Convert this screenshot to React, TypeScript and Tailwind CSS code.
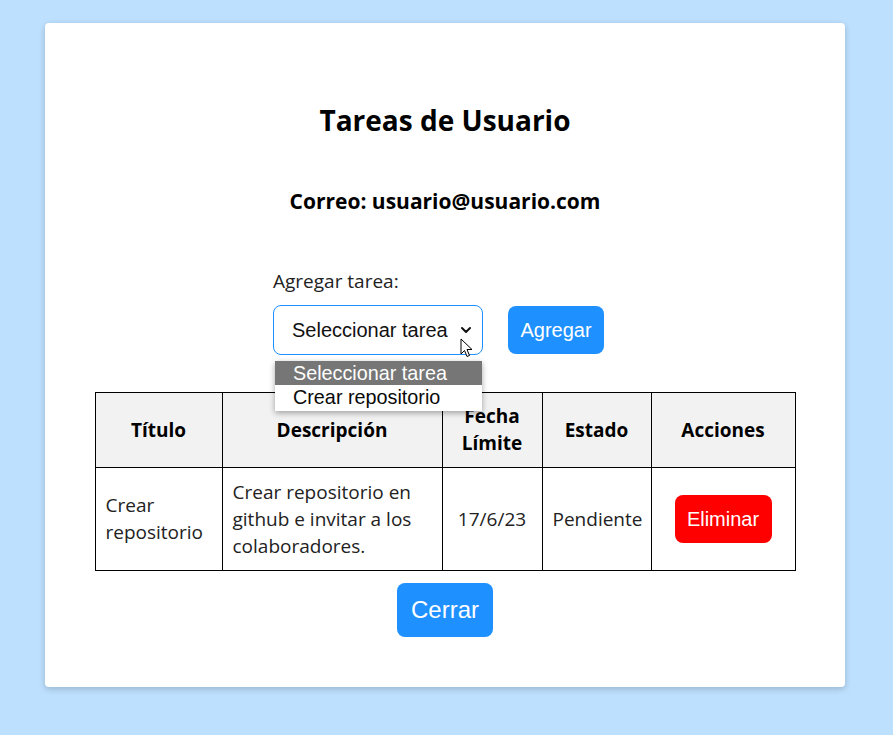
import { ChevronDown } from "lucide-react";

const segoe = "font-['Open_Sans',sans-serif]";
const arial = "font-['Liberation_Sans',Arial,sans-serif]";

const tasks = [
  {
    id: 1,
    title: "Crear repositorio",
    description: "Crear repositorio en github e invitar a los colaboradores.",
    due: "17/6/23",
    status: "Pendiente"
  }
];

function Cursor() {
  return (
    <svg
      className="pointer-events-none absolute left-[187px] top-[33px]"
      width="14"
      height="20"
      viewBox="0 0 14 20"
    >
      <path
        d="M1 1 L1 16 L4.5 12.5 L7 18.5 L9.5 17.5 L7 11.5 L12 11.5 Z"
        fill="white"
        stroke="black"
        strokeWidth="1"
        strokeLinejoin="round"
      />
    </svg>
  );
}

export default function App() {
  return (
    <div className={`min-h-screen bg-[#bde0fe] pt-[23px] pb-[48px] ${segoe}`}>
      <div className="ml-[45px] w-[800px] rounded-[4px] bg-white pt-[78px] pb-[50px] shadow-[0_2px_6px_rgba(0,0,0,0.2)]">
        <h2 className="text-center text-[28px] font-bold leading-[38px] text-black">Tareas de Usuario</h2>
        <h3 className="mt-[47px] text-center text-[21px] font-bold leading-[30px] text-black">
          Correo: usuario@usuario.com
        </h3>

        <div className="mt-[52px] pl-[228px]">
          <label className="block text-[19px] leading-[27px] text-[#222]">Agregar tarea:</label>
          <div className="mt-[10px] flex items-center gap-[25px]">
            <div className="relative">
              <div
                className={`flex h-[50px] w-[210px] items-center justify-between rounded-[8px] border border-[#1e90ff] pl-[18px] pr-[8px] text-[20px] text-[#111] ${arial}`}
              >
                <span>Seleccionar tarea</span>
                <ChevronDown className="h-4 w-4" strokeWidth={3} />
              </div>
              <Cursor />
              <div
                className={`absolute left-[2px] top-[56px] z-10 w-[207px] bg-white pb-[2px] text-[19.8px] leading-[24px] shadow-[0_2px_6px_rgba(0,0,0,0.35)] ${arial}`}
              >
                <div className="bg-[#767676] pl-[18px] text-white">Seleccionar tarea</div>
                <div className="pl-[18px] text-[#0a0a0a]">Crear repositorio</div>
              </div>
            </div>
            <button
              className={`h-[48px] w-[96px] rounded-[8px] bg-[#1e90ff] text-[20px] text-white ${arial}`}
            >
              Agregar
            </button>
          </div>
        </div>

        <table className="mx-auto mt-[37px] w-[700px] table-fixed border-collapse text-[19px] leading-[27px] text-[#222]">
          <colgroup>
            <col className="w-[127px]" />
            <col className="w-[220px]" />
            <col className="w-[100px]" />
            <col className="w-[109px]" />
            <col className="w-[144px]" />
          </colgroup>
          <thead>
            <tr className="h-[75px] bg-[#f2f2f2] text-black">
              {["Título", "Descripción", "Fecha Límite", "Estado", "Acciones"].map((h) => (
                <th key={h} className="border border-black px-[10px] text-center font-bold">
                  {h}
                </th>
              ))}
            </tr>
          </thead>
          <tbody>
            {tasks.map((t) => (
              <tr key={t.id} className="h-[103px]">
                <td className="border border-black px-[10px]">{t.title}</td>
                <td className="border border-black px-[10px]">{t.description}</td>
                <td className="border border-black px-[10px] text-center">{t.due}</td>
                <td className="border border-black px-[10px] text-center">{t.status}</td>
                <td className="border border-black px-[10px] text-center">
                  <button
                    className={`h-[48px] w-[97px] rounded-[8px] bg-[#ff0000] text-[20px] text-white ${arial}`}
                  >
                    Eliminar
                  </button>
                </td>
              </tr>
            ))}
          </tbody>
        </table>

        <div className="mt-[12px] flex justify-center">
          <button className={`h-[54px] w-[96px] rounded-[8px] bg-[#1e90ff] text-[24px] text-white ${arial}`}>
            Cerrar
          </button>
        </div>
      </div>
    </div>
  );
}
